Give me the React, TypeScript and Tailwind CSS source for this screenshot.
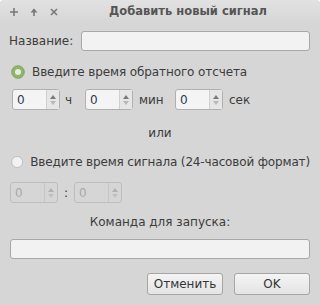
import React from "react";

const font = { fontFamily: '"DejaVu Sans", "Noto Sans", sans-serif' };

function Spin({ disabled = false }: { disabled?: boolean }) {
  return (
    <div
      className={`flex h-[21px] w-[48px] rounded-[3px] border ${
        disabled ? "border-[#bdbdbd] bg-[#d6d6d6]" : "border-[#b0b0b0] bg-[#f4f4f4]"
      }`}
    >
      <div
        className={`flex flex-1 items-center pl-[4px] text-[12px] ${
          disabled ? "text-[#a8a8a8]" : "text-[#2b3a55]"
        }`}
      >
        0
      </div>
      <div
        className={`flex w-[13px] flex-col items-center justify-center gap-[2px] border-l ${
          disabled ? "border-[#c6c6c6]" : "border-[#d0d0d0] bg-[#e6e6e6]"
        }`}
      >
        <svg width="6" height="4" viewBox="0 0 6 4">
          <path d="M3 0 L6 4 L0 4 Z" fill={disabled ? "#b0b0b0" : "#7a7a7a"} />
        </svg>
        <svg width="6" height="4" viewBox="0 0 6 4">
          <path d="M0 0 L6 0 L3 4 Z" fill={disabled ? "#c0c0c0" : "#b8b8b8"} />
        </svg>
      </div>
    </div>
  );
}

function Radio({ checked }: { checked?: boolean }) {
  return (
    <svg width="14" height="14" viewBox="0 0 14 14">
      {checked ? (
        <>
          <circle cx="7" cy="7" r="6.3" fill="#8fb56a" stroke="#7a9d58" strokeWidth="0.8" />
          <circle cx="7" cy="7" r="3" fill="#e8ecdf" />
        </>
      ) : (
        <circle cx="7" cy="7" r="6.3" fill="#f2f2f2" stroke="#b0b0b0" strokeWidth="0.8" />
      )}
    </svg>
  );
}

export default function App() {
  return (
    <div
      className="flex h-[305px] w-[320px] flex-col overflow-hidden rounded-t-[4px] bg-[#d6d6d6] text-[12px] text-[#3c3c3c]"
      style={font}
    >
      {/* title bar */}
      <div className="relative flex h-[24px] items-center bg-gradient-to-b from-[#e2e2e2] to-[#d6d6d6]">
        <div className="flex items-center gap-[10px] pl-[9px]">
          <svg width="10" height="10" viewBox="0 0 10 10">
            <path d="M5 1 V9 M1 5 H9" stroke="#7a7a7a" strokeWidth="1.6" />
          </svg>
          <svg width="10" height="10" viewBox="0 0 10 10">
            <path d="M5 2 V9" stroke="#7a7a7a" strokeWidth="1.6" />
            <path d="M1.5 5.5 L5 1.5 L8.5 5.5 Z" fill="#7a7a7a" />
          </svg>
          <svg width="10" height="10" viewBox="0 0 10 10">
            <path d="M2 2 L8 8 M8 2 L2 8" stroke="#7a7a7a" strokeWidth="1.6" />
          </svg>
        </div>
        <div className="absolute left-[56px] right-0 top-0 flex h-[24px] items-center justify-center whitespace-nowrap text-[11.5px] font-bold text-[#555555]">
          Добавить новый сигнал
        </div>
      </div>

      <div className="flex flex-col px-[10px]">
        {/* name */}
        <div className="mt-[7px] flex h-[20px] items-center">
          <span className="ml-[-1px] w-[72px]">Название:</span>
          <div className="h-[20px] flex-1 rounded-[3px] border border-[#a8a8a8] bg-[#f2f2f2]" />
        </div>

        {/* radio 1 */}
        <div className="mt-[13px] flex h-[16px] items-center gap-[7px] whitespace-nowrap pl-[1px] tracking-[-0.1px]">
          <Radio checked />
          <span>Введите время обратного отсчета</span>
        </div>

        {/* spins */}
        <div className="mt-[9px] flex h-[21px] items-center pl-[2px]">
          <Spin />
          <span className="ml-[5px] w-[20px]">ч</span>
          <Spin />
          <span className="ml-[6px] w-[36px]">мин</span>
          <Spin />
          <span className="ml-[6px]">сек</span>
        </div>

        {/* or */}
        <div className="mt-[16px] flex h-[14px] items-center justify-center">или</div>

        {/* radio 2 */}
        <div className="mt-[14px] flex h-[16px] items-center gap-[7px] whitespace-nowrap pl-[1px] tracking-[-0.15px]">
          <Radio />
          <span>Введите время сигнала (24-часовой формат)</span>
        </div>

        {/* disabled spins */}
        <div className="mt-[12px] flex h-[21px] items-center">
          <Spin disabled />
          <span className="w-[16px] text-center">:</span>
          <Spin disabled />
        </div>

        {/* command */}
        <div className="mt-[12px] flex h-[14px] items-center justify-center">Команда для запуска:</div>
        <div className="mt-[10px] h-[20px] rounded-[3px] border border-[#a8a8a8] bg-[#f2f2f2]" />

        {/* buttons */}
        <div className="mt-[14px] flex justify-end gap-[11px]">
          <button className="flex h-[22px] w-[76px] items-center justify-center rounded-[3px] border border-[#a6a6a6] bg-gradient-to-b from-[#f4f4f4] to-[#e4e4e4] text-[12px] text-[#333333]">
            Отменить
          </button>
          <button className="flex h-[22px] w-[76px] items-center justify-center rounded-[3px] border border-[#a6a6a6] bg-gradient-to-b from-[#f4f4f4] to-[#e4e4e4] text-[12px] text-[#333333]">
            OK
          </button>
        </div>
      </div>
    </div>
  );
}
